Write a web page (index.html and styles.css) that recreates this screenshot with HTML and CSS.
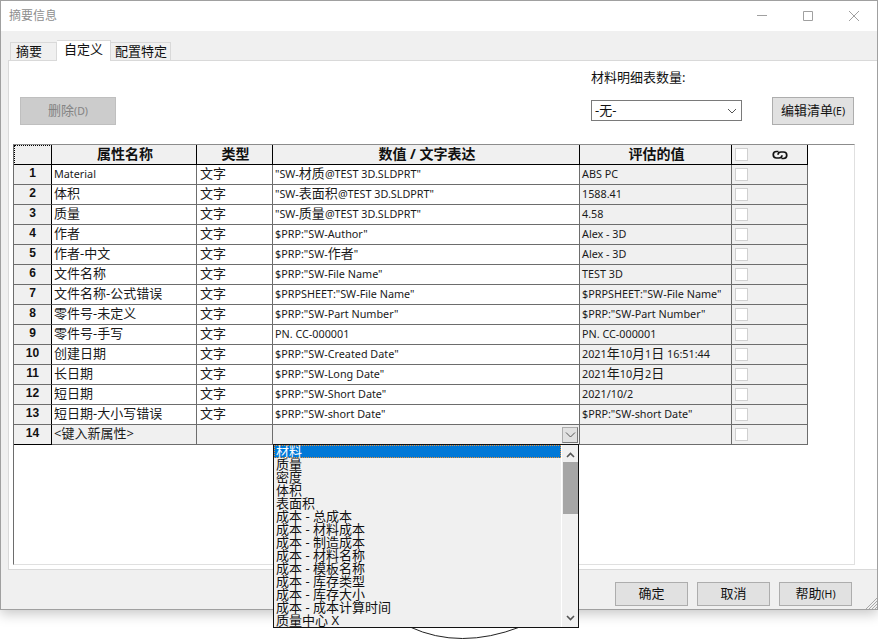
FILE: index.html
```html
<!DOCTYPE html>
<html lang="zh">
<head>
<meta charset="utf-8">
<title>摘要信息</title>
<link rel="stylesheet" href="styles.css">
</head>
<body>
<div class="window">
  <header class="titlebar">
    <span class="title">摘要信息</span>
    <div class="controls">
      <svg class="ctl" width="12" height="12" viewBox="0 0 12 12"><path d="M1 5.500h10" stroke="#a0a0a0" fill="none"/></svg>
      <svg class="ctl" width="12" height="12" viewBox="0 0 12 12"><path d="M1.500 1.500h9v9h-9z" stroke="#a0a0a0" fill="none"/></svg>
      <svg class="ctl" width="12" height="12" viewBox="0 0 12 12"><path d="M1 1l10 10M11 1L1 11" stroke="#a0a0a0" fill="none"/></svg>
    </div>
  </header>
  <nav class="tabs">
    <span class="tab tab-a">摘要</span>
    <span class="tab tab-b active">自定义</span>
    <span class="tab tab-c">配置特定</span>
  </nav>
  <section class="panel">
    <div class="toolbar">
      <button class="btn btn-del">删除<small>(D)</small></button>
      <div class="bom">
        <label class="bom-label">材料明细表数量:</label>
        <div class="bom-row">
          <div class="select"><span>-无-</span>
            <svg width="10" height="6" viewBox="0 0 10 6"><path d="M1 1l4 4 4-4" stroke="#555" fill="none"/></svg>
          </div>
          <button class="btn btn-edit">编辑清单<small>(E)</small></button>
        </div>
      </div>
    </div>
    <div class="gridarea">
      <table class="props">
        <colgroup><col class="c0"><col class="c1"><col class="c2"><col class="c3"><col class="c4"><col class="c5"></colgroup>
        <thead>
          <tr>
            <th class="corner"></th><th>属性名称</th><th>类型</th><th>数值 / 文字表达</th><th>评估的值</th>
            <th class="chk"><div class="linkhead"><i class="box"></i>
              <svg width="18" height="10" viewBox="0 0 16 10"><path d="M6.500 1.500H4.500a3.200 3.200 0 0 0 0 6.500h2.500a3 3 0 0 0 3-2.800M9.500 8.500h2a3.200 3.200 0 0 0 0-6.500H9a3 3 0 0 0-3 2.800" stroke="#111" stroke-width="1.700" fill="none"/></svg>
            </div></th>
          </tr>
        </thead>
        <tbody>
          <tr><th>1</th><td>Material</td><td class="zh">文字</td><td>"SW-<span class="zh">材质</span>@TEST 3D.SLDPRT"</td><td class="g">ABS PC</td><td class="g chk"><i class="box"></i></td></tr>
          <tr><th>2</th><td class="zh">体积</td><td class="zh">文字</td><td>"SW-<span class="zh">表面积</span>@TEST 3D.SLDPRT"</td><td class="g">1588.41</td><td class="g chk"><i class="box"></i></td></tr>
          <tr><th>3</th><td class="zh">质量</td><td class="zh">文字</td><td>"SW-<span class="zh">质量</span>@TEST 3D.SLDPRT"</td><td class="g">4.58</td><td class="g chk"><i class="box"></i></td></tr>
          <tr><th>4</th><td class="zh">作者</td><td class="zh">文字</td><td>$PRP:"SW-Author"</td><td class="g">Alex - 3D</td><td class="g chk"><i class="box"></i></td></tr>
          <tr><th>5</th><td class="zh">作者-中文</td><td class="zh">文字</td><td>$PRP:"SW-<span class="zh">作者</span>"</td><td class="g">Alex - 3D</td><td class="g chk"><i class="box"></i></td></tr>
          <tr><th>6</th><td class="zh">文件名称</td><td class="zh">文字</td><td>$PRP:"SW-File Name"</td><td class="g">TEST 3D</td><td class="g chk"><i class="box"></i></td></tr>
          <tr><th>7</th><td class="zh">文件名称-公式错误</td><td class="zh">文字</td><td>$PRPSHEET:"SW-File Name"</td><td class="g">$PRPSHEET:"SW-File Name"</td><td class="g chk"><i class="box"></i></td></tr>
          <tr><th>8</th><td class="zh">零件号-未定义</td><td class="zh">文字</td><td>$PRP:"SW-Part Number"</td><td class="g">$PRP:"SW-Part Number"</td><td class="g chk"><i class="box"></i></td></tr>
          <tr><th>9</th><td class="zh">零件号-手写</td><td class="zh">文字</td><td>PN. CC-000001</td><td class="g">PN. CC-000001</td><td class="g chk"><i class="box"></i></td></tr>
          <tr><th>10</th><td class="zh">创建日期</td><td class="zh">文字</td><td>$PRP:"SW-Created Date"</td><td class="g">2021<span class="zh">年</span>10<span class="zh">月</span>1<span class="zh">日</span> 16:51:44</td><td class="g chk"><i class="box"></i></td></tr>
          <tr><th>11</th><td class="zh">长日期</td><td class="zh">文字</td><td>$PRP:"SW-Long Date"</td><td class="g">2021<span class="zh">年</span>10<span class="zh">月</span>2<span class="zh">日</span></td><td class="g chk"><i class="box"></i></td></tr>
          <tr><th>12</th><td class="zh">短日期</td><td class="zh">文字</td><td>$PRP:"SW-Short Date"</td><td class="g">2021/10/2</td><td class="g chk"><i class="box"></i></td></tr>
          <tr><th>13</th><td class="zh">短日期-大小写错误</td><td class="zh">文字</td><td>$PRP:"SW-short Date"</td><td class="g">$PRP:"SW-short Date"</td><td class="g chk"><i class="box"></i></td></tr>
          <tr class="newrow"><th>14</th><td class="g zh">&lt;键入新属性&gt;</td><td class="g"></td>
            <td class="g combo"><span class="combo-btn"><svg width="11" height="6" viewBox="0 0 11 6"><path d="M1 .5l4.500 4.500L10 .5" stroke="#555" fill="none"/></svg></span></td>
            <td class="g"></td><td class="g chk"><i class="box"></i></td></tr>
        </tbody>
      </table>
    </div>
  </section>
  <footer class="footer">
    <button class="btn btn-foot">确定</button>
    <button class="btn btn-foot">取消</button>
    <button class="btn btn-foot">帮助<small>(H)</small></button>
    <svg class="grip" width="12" height="12" viewBox="0 0 12 12"><path d="M12 1L1 12M12 4L4 12M12 7L7 12M12 10l-2 2" stroke="#a8a8a8" fill="none"/></svg>
  </footer>
</div>
<div class="dropdown">
  <ul class="list">
    <li class="sel">材料</li><li>质量</li><li>密度</li><li>体积</li><li>表面积</li>
    <li>成本 - 总成本</li><li>成本 - 材料成本</li><li>成本 - 制造成本</li><li>成本 - 材料名称</li><li>成本 - 模板名称</li>
    <li>成本 - 库存类型</li><li>成本 - 库存大小</li><li>成本 - 成本计算时间</li><li>质量中心 X</li>
  </ul>
  <div class="scroll">
    <svg class="arrow" width="9" height="6" viewBox="0 0 9 6"><path d="M1 5l3.500-3.500L8 5" stroke="#555" stroke-width="1.600" fill="none"/></svg>
    <div class="thumb"></div>
    <svg class="arrow" width="9" height="6" viewBox="0 0 9 6"><path d="M1 1l3.500 3.500L8 1" stroke="#555" stroke-width="1.600" fill="none"/></svg>
  </div>
</div>
<svg class="arc" width="120" height="14" viewBox="0 0 120 14"><path d="M5 1Q55 24 115 1" stroke="#222" fill="none"/></svg>
</body>
</html>
```
FILE: styles.css
```css
* { box-sizing: border-box; }
html, body { margin: 0; padding: 0; height: 640px; overflow: hidden; background: #fff; }
body {
  position: relative;
  font-family: "Noto Sans", "Noto Sans CJK SC", sans-serif;
  font-size: 13px;
  color: #111;
}
.window {
  width: 878px;
  height: 610px;
  display: flex;
  flex-direction: column;
  background: #f0f0f0;
  border: 1px solid #a0a0a0;
  box-shadow: 0 4px 12px rgba(0,0,0,.22);
}
.titlebar {
  height: 30px;
  flex: none;
  background: #fff;
  display: flex;
  align-items: center;
  justify-content: space-between;
  padding-left: 8px;
}
.title { font-size: 12px; line-height: 14px; margin-top: -1px; color: #8e8e8e; }
.controls { display: flex; gap: 34px; padding-right: 17px; }
.ctl { display: block; }
.tabs {
  height: 29px;
  flex: none;
  padding-left: 9px;
  display: flex;
  align-items: flex-end;
  position: relative;
  z-index: 1;
}
.tab {
  height: 18px;
  line-height: 16px;
  background: #f0f0f0;
  border: 1px solid #d9d9d9;
  border-bottom: 0;
  padding-left: 5px;
}
.tab-a { width: 47px; }
.tab-b { width: 54px; border-left: 0; padding-left: 7px; }
.tab-c { width: 60px; border-left: 0; padding-left: 4px; }
.tab.active { background: #fff; line-height: 16px; margin-bottom: -1px; height: 21px; }
.panel {
  flex: 1;
  margin-left: 7px;
  background: #fff;
  border: 1px solid #d9d9d9;
  border-right: 0;
  padding: 4px;
  display: flex;
  flex-direction: column;
}
.toolbar {
  height: 79px;
  flex: none;
  display: flex;
  justify-content: space-between;
  padding: 32px 19px 0 7px;
  position: relative;
}
.btn {
  font: inherit;
  line-height: 16px;
  color: #111;
  background: #e1e1e1;
  border: 1px solid #adadad;
  padding: 0 0 2px;
  display: flex;
  align-items: center;
  justify-content: center;
}
.btn small { font-size: 10.5px; line-height: 16px; margin-top: 2px; }
.btn-del {
  width: 96px;
  height: 28px;
  background: #cccccc;
  border-color: #bfbfbf;
  color: #838383;
}
.bom { width: 263px; margin-top: -28px; display: flex; flex-direction: column; }
.bom-label { height: 28px; line-height: 16px; }
.bom-row { display: flex; justify-content: space-between; align-items: flex-start; }
.select {
  width: 151px;
  height: 21px;
  margin-top: 3px;
  border: 1px solid #7a7a7a;
  background: #fff;
  display: flex;
  align-items: center;
  justify-content: space-between;
  padding: 0 4px 0 3px;
  line-height: 16px;
}
.select span { margin-top: -2px; }
.btn-edit { width: 82px; height: 28px; }
.gridarea {
  flex: 1;
  margin-right: 18px;
  background: #fff;
  border-top: 1px solid #8c8c8c;
  border-left: 1px solid #6d6d6d;
  border-right: 1px solid #e0e0e0;
  border-bottom: 1px solid #e0e0e0;
}
.props {
  table-layout: fixed;
  width: 794px;
  border-collapse: separate;
  border-spacing: 0;
}
.c0 { width: 38px; }
.c1 { width: 145px; }
.c2 { width: 76px; }
.c3 { width: 307px; }
.c4 { width: 152px; }
.c5 { width: 76px; }
.props th, .props td {
  height: 20px;
  padding: 0 2px 2px;
  border-right: 1px solid #6d6d6d;
  border-bottom: 1px solid #6d6d6d;
  white-space: nowrap;
  overflow: hidden;
  font-size: 10.8px;
  line-height: 14px;
}
.props td { background: #fff; color: #1a1a1a; }
.props .zh { font-size: 13px; }
.props td.zh { padding-bottom: 4px; }
.props td:nth-child(3) { padding-left: 3px; }
.props thead th {
  background: #f0f0f0;
  border-color: #000;
  font-size: 14px;
  font-weight: 700;
  height: 20px;
  padding-left: 4px;
}
.props thead .corner { outline: 1px dotted #000; outline-offset: -1px; }
.props tbody th {
  background: #f0f0f0;
  border-right-color: #000;
  font-family: "Liberation Sans", sans-serif;
  font-size: 12px;
  font-weight: 700;
  padding-bottom: 3px;
}
.props td.g { background: #f0f0f0; }
.props .newrow th { border-bottom-color: #000; }
.props td.chk, .props th.chk { padding: 0 0 0 3px; }
.box {
  display: block;
  width: 13px;
  height: 13px;
  background: #fff;
  border: 1px solid #d0d0d0;
}
.linkhead { display: flex; align-items: center; justify-content: space-between; padding-right: 18px; }
.props td.combo { padding: 0; }
.combo-btn {
  display: flex;
  align-items: center;
  justify-content: center;
  width: 16px;
  height: 16px;
  margin: 1px 1px 1px auto;
  background: #e1e1e1;
  border: 1px solid #adadad;
  border-bottom-color: #777;
  border-right-color: #777;
}
.footer {
  height: 39px;
  flex: none;
  display: flex;
  justify-content: flex-end;
  gap: 9px;
  padding: 12px 25px 3px 0;
  position: relative;
}
.btn-foot { width: 73px; height: 24px; }
.grip { position: absolute; right: 0; bottom: 0; }
.dropdown {
  position: absolute;
  left: 273px;
  top: 444px;
  width: 306px;
  height: 184px;
  border: 1px solid #111;
  background: #f0f0f0;
  display: flex;
  z-index: 3;
}
.list {
  list-style: none;
  margin: 0;
  padding: 0;
  flex: 1;
  overflow: hidden;
}
.list li { height: 13px; line-height: 12px; padding-left: 2px; white-space: nowrap; }
.list .sel {
  background: #0078d7;
  color: #fff;
  outline: 1px dotted #e8923a;
  outline-offset: -1px;
}
.scroll {
  width: 17px;
  background: #f0f0f0;
  border-left: 1px solid #fff;
  display: flex;
  flex-direction: column;
  align-items: center;
  padding-top: 7px;
}
.arrow { flex: none; display: block; }
.thumb { width: 15px; height: 52px; margin-top: 4px; margin-bottom: auto; background: #a6a6a6; }
.scroll .arrow:last-child { margin-bottom: 6px; }
.arc { position: absolute; left: 405px; top: 626px; z-index: 2; }
```
